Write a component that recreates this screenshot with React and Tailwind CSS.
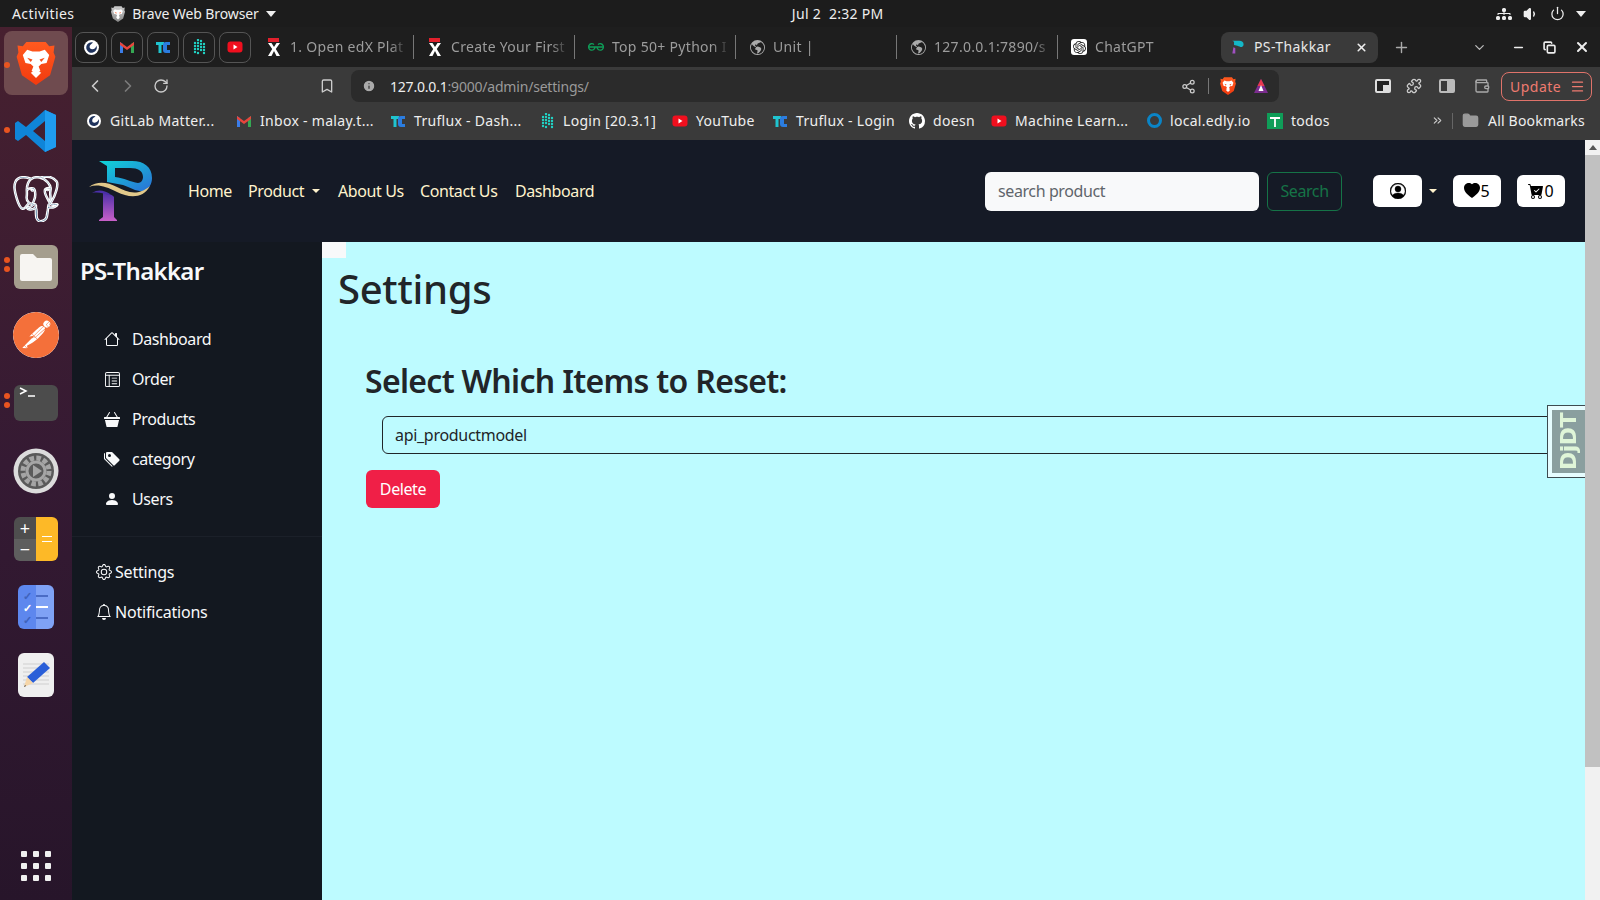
import { ChevronLeft, ChevronRight, RotateCw, Bookmark, Info, Share2, Puzzle, Wallet, Menu, Plus, X, ChevronDown, Minus, Copy, Volume1, Power, ChevronsRight, Folder } from "lucide-react";
import { BsHouse, BsLayoutTextWindowReverse, BsBasket3Fill, BsTagsFill, BsPersonFill, BsGear, BsBell, BsPersonCircle, BsHeartFill, BsCartCheckFill, BsGithub, BsGlobeAmericas, BsDiagram3Fill } from "react-icons/bs";
import { SiPostgresql, SiPostman, SiOpenai } from "react-icons/si";

const ui = "font-['Noto_Sans',sans-serif]";

function BraveLogo({ size = 44, mono = false }) {
  return (
    <svg width={size} height={size} viewBox="0 0 44 50">
      <defs>
        <linearGradient id={mono ? "brm" : "brc"} x1="0" y1="0" x2="0" y2="1">
          <stop offset="0" stopColor={mono ? "#ccc" : "#ff5a1f"} />
          <stop offset="1" stopColor={mono ? "#888" : "#f23a0f"} />
        </linearGradient>
      </defs>
      <path d="M11 1h22l4 5 6-1-1 8 2 5-6 21-16 11-16-11L0 18l2-5-1-8 6 1z" fill={`url(#${mono ? "brm" : "brc"})`} />
      <path d="M12 10l6 2h8l6-2 5 6-3 9-6 1-3 3 2 5-5 3-5-3 2-5-3-3-6-1-3-9z" fill="#fff" />
      <path d="M16 36l6-3 6 3-6 6z" fill="#fff" />
      <path d="M12 19l6 2-2 3zM32 19l-6 2 2 3z" fill="#f4511e" />
    </svg>
  );
}

function Logo() {
  return (
    <svg width="66" height="62" viewBox="0 0 66 62">
      <defs>
        <linearGradient id="ptop" x1="0" y1="0" x2="1" y2="1">
          <stop offset="0" stopColor="#0fd6d8" />
          <stop offset="1" stopColor="#2b6fd6" />
        </linearGradient>
        <linearGradient id="pbot" x1="0" y1="0" x2="0" y2="1">
          <stop offset="0" stopColor="#4a2fa8" />
          <stop offset="1" stopColor="#c860c8" />
        </linearGradient>
      </defs>
      <path d="M11 1h33c12 0 20 6 20 17 0 6-3 11-8 13-7 1-13-3-21-6l-16-3V6z" fill="url(#ptop)" />
      <path d="M27 8h15c8 0 13 3 13 9 0 3-2 6-5 6-7-1-14-5-23-6z" fill="#151a26" />
      <path d="M15 32c4 1 10 3 11 5v20l3 3v1H11v-1l4-3z" fill="url(#pbot)" />
      <path d="M1 27c8-6 18-5 28 0s20 10 33-1c-7 13-21 12-33 6S9 24 1 27z" fill="#e2c98a" />
      <path d="M4 33c6-4 12-3 18 1l-2 1c-5-2-10-3-16-2z" fill="#4a2fa8" />
    </svg>
  );
}

function Pinned({ children }) {
  return <div className="w-8 h-[31px] rounded-lg border border-[#555] flex items-center justify-center">{children}</div>;
}

function Gmail({ size = 16 }) {
  return (
    <svg width={size} height={size} viewBox="0 0 16 16">
      <path d="M1 14V3l3 2v9z" fill="#3b7de8" />
      <path d="M12 14V5l3-2v11z" fill="#35a853" />
      <path d="M1 3l7 5 7-5v3L8 11 1 6z" fill="#e8453c" />
    </svg>
  );
}

function Truflux({ size = 16 }) {
  return (
    <svg width={size} height={size} viewBox="0 0 16 16">
      <path d="M1 3h8v3H6.500v8h-3V6H1z" fill="#1fc4cf" />
      <path d="M15 3h-4a3 3 0 0 0-3 3v5a3 3 0 0 0 3 3h4v-3h-3V6h3z" fill="#2b7de0" />
    </svg>
  );
}

function Dots({ size = 16 }) {
  const cells = [[7, 1], [10, 2], [4, 4], [7, 4], [10, 5], [13, 5], [4, 7], [7, 7], [10, 8], [13, 8], [4, 10], [7, 10], [10, 11], [13, 11], [4, 13], [7, 14], [13, 14]];
  return (
    <svg width={size} height={size} viewBox="0 0 16 16">
      {cells.map(([x, y]) => <circle key={`${x}-${y}`} cx={x} cy={y} r="1.200" fill="#22d3c5" />)}
    </svg>
  );
}

function Yt({ size = 16 }) {
  return (
    <svg width={size} height={size} viewBox="0 0 16 16">
      <rect x="0.500" y="2.500" width="15" height="11" rx="3" fill="#f00f1e" />
      <path d="M6.500 5.600l4 2.400-4 2.400z" fill="#fff" />
    </svg>
  );
}

function GitlabMatter({ size = 16 }) {
  return (
    <svg width={size} height={size} viewBox="0 0 16 16">
      <circle cx="8" cy="8" r="7" fill="#fff" />
      <path d="M8 3a5 5 0 1 0 4.600 3c-.5 2-1.600 3.600-4 3.700-1.500 0-2.400-1-2.400-2.300C6.200 5.500 8 4.500 9.500 3.300z" fill="#1e325c" />
    </svg>
  );
}

function EdxX() {
  return (
    <svg width="16" height="18" viewBox="0 0 16 18">
      <rect x="2" y="0" width="11" height="4" fill="#e2202c" />
      <path d="M2 5h3.500L8 9l2.500-4H14l-4.200 6 4.200 7h-3.500L8 13l-2.500 5H2l4.200-7z" fill="#fff" />
    </svg>
  );
}

function Gfg() {
  return (
    <svg width="16" height="10" viewBox="0 0 16 10">
      <path d="M1 5h14M7 5a3.200 3.200 0 1 1-1-2.400M9 5a3.200 3.200 0 1 0 1-2.400" fill="none" stroke="#0f9d58" strokeWidth="1.300" />
    </svg>
  );
}

function Tab({ icon, label, last }) {
  return (
    <div className={`w-[161px] h-6 flex items-center pl-[13px] ${last ? "" : "border-r border-[#777]"}`}>
      <span className="w-4 h-4 flex items-center justify-center shrink-0">{icon}</span>
      <span className="ml-2 w-[118px] pb-[2px] overflow-hidden whitespace-nowrap text-[14px] tracking-[0.3px] text-[#9c9c9c] [mask-image:linear-gradient(to_right,black_85%,transparent)]">{label}</span>
    </div>
  );
}

const bookmarks = [
  { w: "w-[150px]", icon: <GitlabMatter />, label: "GitLab Matter..." },
  { w: "w-[154px]", icon: <Gmail />, label: "Inbox - malay.t..." },
  { w: "w-[149px]", icon: <Truflux />, label: "Truflux - Dash..." },
  { w: "w-[133px]", icon: <Dots />, label: "Login [20.3.1]" },
  { w: "w-[100px]", icon: <Yt />, label: "YouTube" },
  { w: "w-[137px]", icon: <Truflux />, label: "Truflux - Login" },
  { w: "w-[82px]", icon: <BsGithub size={16} color="#fff" />, label: "doesn" },
  { w: "w-[155px]", icon: <Yt />, label: "Machine Learn..." },
  { w: "w-[121px]", icon: <span className="w-[15px] h-[15px] rounded-full border-[3px] border-[#0a84c6]" />, label: "local.edly.io" },
  {
    w: "w-[100px]",
    icon: (
      <svg width="16" height="16" viewBox="0 0 16 16">
        <rect width="16" height="16" fill="#0f9d58" />
        <path d="M3 5h10M8 5v9" stroke="#fff" strokeWidth="1.800" />
      </svg>
    ),
    label: "todos",
  },
];

function Dot({ className }) {
  return <span className={`absolute left-[4px] w-[6px] h-[6px] rounded-full bg-[#e95420] ${className}`} />;
}

function TopBar() {
  return (
    <div className="h-[27px] bg-[#1c1c1c] text-[#eee] text-[14px] flex items-center shrink-0 relative">
      <span className="ml-3 tracking-[0.4px]">Activities</span>
      <span className="ml-[36px]"><BraveLogo size={16} mono /></span>
      <span className="ml-[6px] tracking-[-0.1px]">Brave Web Browser</span>
      <span className="ml-[7px] w-0 h-0 border-x-[5px] border-x-transparent border-t-[6px] border-t-[#eee]" />
      <span className="ml-[516px] tracking-[0.3px]">Jul 2&nbsp;&nbsp;2:32 PM</span>
      <div className="ml-auto flex items-center gap-[11px] pr-[14px]">
        <BsDiagram3Fill size={16} color="#eee" />
        <Volume1 size={16} color="#eee" fill="#eee" />
        <Power size={15} color="#eee" />
        <span className="w-0 h-0 border-x-[5px] border-x-transparent border-t-[6px] border-t-[#eee]" />
      </div>
    </div>
  );
}

function Dock() {
  return (
    <div className="w-[72px] shrink-0 flex flex-col items-center bg-gradient-to-b from-[#47202f] via-[#351a33] to-[#27152a] relative pt-[4px]">
      <div className="w-16 h-16 rounded-lg bg-[#6f4b4f] flex items-center justify-center relative">
        <span className="absolute left-0 top-[31px] w-[6px] h-[6px] rounded-full bg-[#e95420]" />
        <BraveLogo size={44} />
      </div>
      <div className="mt-[2px] h-[68px] w-full flex items-center justify-center relative">
        <Dot className="top-[30px]" />
        <svg width="44" height="44" viewBox="0 0 44 44">
          <path d="M31 1l11 5v32l-11 5-19-17-8 6-3-2V14l3-2 8 6zM31 12L19 22l12 10z" fill="#0f85d8" />
          <path d="M31 1l11 5v32l-11 5z" fill="#1f9cf0" />
        </svg>
      </div>
      <div className="h-[68px] w-full flex items-center justify-center">
        <SiPostgresql size={46} color="#336791" stroke="#ffffff" strokeWidth="0.6" />
      </div>
      <div className="h-[68px] w-full flex items-center justify-center relative">
        <Dot className="top-[24px]" />
        <Dot className="top-[33px]" />
        <div className="w-[44px] h-[44px] rounded-md bg-[#a59e8e] flex items-center justify-center">
          <svg width="32" height="28" viewBox="0 0 32 28"><path d="M2 1h11l4 4h13a2 2 0 0 1 2 2v19a2 2 0 0 1-2 2H2a2 2 0 0 1-2-2V3a2 2 0 0 1 2-2z" fill="#f7f5f2" /></svg>
        </div>
      </div>
      <div className="h-[68px] w-full flex items-center justify-center">
        <div className="w-[46px] h-[46px] rounded-full bg-white flex items-center justify-center overflow-hidden">
          <SiPostman size={46} color="#f4703a" />
        </div>
      </div>
      <div className="h-[68px] w-full flex items-center justify-center relative">
        <Dot className="top-[24px]" />
        <Dot className="top-[33px]" />
        <div className="w-[44px] h-[36px] rounded-md bg-[#4c4c4c] flex items-start">
          <svg width="26" height="16" viewBox="0 0 26 16"><path d="M6 3l6 3-6 3M14 11h7" fill="none" stroke="#fff" strokeWidth="1.500" /></svg>
        </div>
      </div>
      <div className="h-[68px] w-full flex items-center justify-center">
        <svg width="46" height="46" viewBox="0 0 46 46">
          <circle cx="23" cy="23" r="22.500" fill="#dcdcdc" />
          <circle cx="23" cy="23" r="18" fill="#5a5a5a" />
          <circle cx="23" cy="23" r="13" fill="none" stroke="#a5a5a5" strokeWidth="5" strokeDasharray="4.500 2.300" />
          <circle cx="23" cy="23" r="9" fill="none" stroke="#a5a5a5" strokeWidth="3" />
          <path d="M20 17l9 6-9 6z" fill="#a5a5a5" />
        </svg>
      </div>
      <div className="h-[68px] w-full flex items-center justify-center">
        <div className="w-[44px] h-[44px] rounded-md overflow-hidden grid grid-cols-2 grid-rows-2">
          <div className="bg-[#4e4e4e] text-white text-[18px] leading-[22px] text-center">+</div>
          <div className="row-span-2 bg-[#fdb927] flex flex-col items-center justify-center gap-[4px]">
            <span className="w-[10px] h-px bg-white" />
            <span className="w-[10px] h-px bg-white" />
          </div>
          <div className="bg-[#5e5e5e] text-white text-[18px] leading-[20px] text-center">−</div>
        </div>
      </div>
      <div className="h-[68px] w-full flex items-center justify-center">
        <div className="w-9 h-11 rounded-md overflow-hidden grid grid-cols-2">
          <div className="bg-[#5d87ee] flex flex-col items-center justify-center gap-[5px] text-[11px] leading-[7px] text-white font-bold"><span className="text-[#3f63bd]">✓</span><span>✓</span><span className="text-[#3f63bd]">✓</span></div>
          <div className="bg-[#7fa2f5] flex flex-col items-start justify-center gap-[9px]">
            <span className="w-3 h-[2px] bg-[#4a6cc5]" />
            <span className="w-3 h-[2px] bg-white" />
            <span className="w-3 h-[2px] bg-[#4a6cc5]" />
          </div>
        </div>
      </div>
      <div className="h-[68px] w-full flex items-center justify-center">
        <div className="w-9 h-11 rounded-md bg-[#efefef] flex items-center justify-center">
          <svg width="32" height="32" viewBox="0 0 32 32">
            <path d="M3 5h26M3 9h26M3 13h26M3 17h26M3 21h26M3 25h26" stroke="#cfcfcf" strokeWidth="1" />
            <path d="M24 3l6 6-17 15-6-6z" fill="#2a5fd8" />
            <path d="M7 18l6 6-9 4z" fill="#f5d5a8" />
            <path d="M5 26l-1 2 2-1z" fill="#333" />
          </svg>
        </div>
      </div>
      <div className="mt-auto mb-[19px] grid grid-cols-3 gap-[6px]">
        {[0, 1, 2, 3, 4, 5, 6, 7, 8].map((i) => <span key={i} className="w-[6px] h-[6px] rounded-[1px] bg-[#f0f0f0]" />)}
      </div>
    </div>
  );
}

function TabStrip() {
  return (
    <div className="h-[40px] bg-[#1e1e1e] flex items-center shrink-0">
      <div className="flex items-center gap-[4px] pl-[3px] w-[181px] shrink-0">
        <Pinned><GitlabMatter size={17} /></Pinned>
        <Pinned><Gmail /></Pinned>
        <Pinned><Truflux /></Pinned>
        <Pinned><Dots /></Pinned>
        <Pinned><Yt /></Pinned>
      </div>
      <Tab icon={<EdxX />} label="1. Open edX Plat" />
      <Tab icon={<EdxX />} label="Create Your First" />
      <Tab icon={<Gfg />} label="Top 50+ Python I" />
      <Tab icon={<BsGlobeAmericas size={15} color="#aaa" />} label="Unit |" />
      <Tab icon={<BsGlobeAmericas size={15} color="#aaa" />} label="127.0.0.1:7890/s" />
      <Tab icon={<span className="w-4 h-4 rounded-[3px] bg-white flex items-center justify-center"><SiOpenai size={13} color="#222" /></span>} label="ChatGPT" last />
      <div className="ml-[2px] w-[157px] h-[31px] rounded-lg bg-[#3a3a3a] flex items-center pl-[4px] pr-[10px]">
        <span className="ml-[4px] w-4 flex justify-center"><svg width="14" height="16" viewBox="0 0 66 62"><path d="M11 1h33c12 0 20 6 20 17 0 6-3 11-8 13-7 1-13-3-21-6l-16-3V6z" fill="#14b8c8" /><path d="M16 32c4 1 8 3 9 5v25H11z" fill="#a050c0" /></svg></span>
        <span className="ml-[9px] pb-[2px] text-[14px] tracking-[0.4px] text-[#e8e8e8]">PS-Thakkar</span>
        <X size={13} color="#eee" strokeWidth={3} className="ml-auto" />
      </div>
      <Plus size={17} color="#aaa" className="ml-[15px]" />
      <ChevronDown size={15} color="#bbb" className="ml-[62px]" />
      <Minus size={13} color="#eee" strokeWidth={3} className="ml-[25px]" />
      <Copy size={13} color="#eee" strokeWidth={3} className="ml-[18px]" />
      <X size={16} color="#eee" strokeWidth={3} className="ml-[18px]" />
    </div>
  );
}

function Toolbar() {
  return (
    <div className="h-[36px] bg-[#3a3a3a] flex items-center pt-[2px] shrink-0">
      <ChevronLeft size={20} color="#ccc" className="ml-[13px]" />
      <ChevronRight size={20} color="#7c7c7c" className="ml-[13px]" />
      <RotateCw size={16} color="#ccc" className="ml-[15px]" />
      <Bookmark size={16} color="#ccc" className="ml-[150px]" />
      <div className="ml-[16px] w-[928px] h-[32px] rounded-lg bg-[#2b2b2b] flex items-center">
        <Info size={14} color="#2b2b2b" fill="#aaa" className="ml-[11px]" />
        <span className="ml-[14px] text-[14px] tracking-[-0.2px] text-[#eee]">127.0.0.1<span className="text-[#9a9a9a]">:9000/admin/settings/</span></span>
        <Share2 size={15} color="#ccc" className="ml-auto" />
        <span className="ml-[12px] w-px h-[16px] bg-[#777]" />
        <span className="ml-[10px]"><BraveLogo size={18} /></span>
        <svg className="ml-[16px] mr-[10px]" width="16" height="16" viewBox="0 0 16 16">
          <path d="M8 1l7 14H1z" fill="#7b2d8e" />
          <path d="M8 1l3.500 7h-7z" fill="#e8384f" />
          <path d="M8 7l2.500 6h-5z" fill="#fff" />
        </svg>
      </div>
      <div className="ml-[96px] w-[16px] h-[14px] rounded-[2px] border-2 border-[#ddd] bg-[#222] flex items-end justify-end"><span className="w-[6px] h-[6px] bg-[#ddd]" /></div>
      <Puzzle size={16} color="#ccc" className="ml-[15px]" />
      <div className="ml-[17px] w-[16px] h-[14px] rounded-[2px] border-2 border-[#bbb] flex justify-end"><span className="w-[6px] h-full bg-[#bbb]" /></div>
      <Wallet size={16} color="#aaa" className="ml-[19px]" />
      <div className="ml-[11px] w-[91px] h-[29px] rounded-lg border border-[#e0736a] flex items-center justify-between pl-[8px] pr-[6px] text-[#ef7b70] text-[14px] tracking-[0.5px]">
        <span>Update</span>
        <Menu size={15} color="#ef7b70" />
      </div>
    </div>
  );
}

function BookmarksBar() {
  return (
    <div className="h-[37px] bg-[#3a3a3a] flex items-center pl-[14px] pb-[2px] shrink-0">
      {bookmarks.map((b) => (
        <div key={b.label} className={`${b.w} shrink-0 flex items-center gap-[8px] text-[14px] tracking-[0.3px] text-[#eee] whitespace-nowrap`}>
          <span className="w-4 h-4 flex items-center justify-center shrink-0">{b.icon}</span>
          <span>{b.label}</span>
        </div>
      ))}
      <ChevronsRight size={13} color="#ccc" className="ml-[64px]" />
      <span className="ml-[8px] w-px h-[16px] bg-[#666]" />
      <Folder size={17} color="#9a9a9a" fill="#9a9a9a" className="ml-[9px]" />
      <span className="ml-[9px] text-[14px] tracking-[0.2px] text-[#eee] whitespace-nowrap">All Bookmarks</span>
    </div>
  );
}

function Navbar() {
  const links = [
    { w: "w-[60px]", label: "Home" },
    { w: "w-[90px]", label: "Product", caret: true },
    { w: "w-[82px]", label: "About Us" },
    { w: "w-[95px]", label: "Contact Us" },
    { w: "w-[90px]", label: "Dashboard" },
  ];
  return (
    <div className="h-[102px] bg-[#151a26] flex items-center shrink-0">
      <div className="ml-[16px] w-[100px] shrink-0"><Logo /></div>
      <div className="flex items-center text-[16px] tracking-[-0.4px] text-[#fff3cd]">
        {links.map((l) => (
          <span key={l.label} className={`${l.w} flex items-center whitespace-nowrap`}>
            {l.label}
            {l.caret && <span className="ml-[8px] w-0 h-0 border-x-[4px] border-x-transparent border-t-[4px] border-t-[#fff3cd]" />}
          </span>
        ))}
      </div>
      <div className="ml-[380px] w-[274px] h-[39px] rounded-md bg-[#f8f9fa] flex items-center pl-[13px] text-[16px] tracking-[-0.4px] text-[#5f656b]">search product</div>
      <div className="ml-[8px] w-[75px] h-[39px] rounded-md border border-[#157347] flex items-center justify-center text-[16px] tracking-[-0.4px] text-[#157347]">Search</div>
      <div className="ml-[31px] w-[49px] h-[32px] rounded-md bg-white flex items-center justify-center"><BsPersonCircle size={16} color="#000" stroke="#000" strokeWidth="0.4" /></div>
      <span className="ml-[7px] w-0 h-0 border-x-[4px] border-x-transparent border-t-[4px] border-t-[#fff3cd]" />
      <div className="ml-[16px] w-[48px] h-[32px] rounded-md bg-white flex items-center justify-center text-[16px] text-black"><BsHeartFill size={16} color="#000" />5</div>
      <div className="ml-[16px] w-[48px] h-[32px] rounded-md bg-white flex items-center justify-center text-[16px] text-black"><BsCartCheckFill size={16} color="#000" />0</div>
    </div>
  );
}

function Sidebar() {
  const items = [
    { icon: <BsHouse size={16} />, label: "Dashboard" },
    { icon: <BsLayoutTextWindowReverse size={15} />, label: "Order" },
    { icon: <BsBasket3Fill size={16} />, label: "Products" },
    { icon: <BsTagsFill size={16} />, label: "category" },
    { icon: <BsPersonFill size={16} />, label: "Users" },
  ];
  return (
    <div className="w-[250px] shrink-0 bg-[#131820] text-[#f8f9fa]">
      <div className="pl-[8px] pt-[16px] text-[24px] leading-[26px] font-semibold tracking-[-0.7px]">PS-Thakkar</div>
      <div className="mt-[35px] pl-[32px] border-b border-[#1b2029] pb-[17px]">
        {items.map((it) => (
          <div key={it.label} className="h-[40px] flex items-center text-[16px] tracking-[-0.4px]">
            <span className="w-4 flex justify-center shrink-0">{it.icon}</span>
            <span className="ml-[12px]">{it.label}</span>
          </div>
        ))}
      </div>
      <div className="mt-[15px] pl-[24px]">
        <div className="h-[40px] flex items-center gap-[3px] text-[16px] tracking-[-0.2px]"><BsGear size={16} />Settings</div>
        <div className="h-[40px] flex items-center gap-[3px] text-[16px] tracking-[-0.2px]"><BsBell size={16} />Notifications</div>
      </div>
    </div>
  );
}

function Content() {
  return (
    <div className="flex-1 min-w-0 bg-[#bdfbff] text-[#212529] relative overflow-hidden">
      <div className="w-[24px] h-[16px] bg-[#f8f9fa]" />
      <h1 className="ml-[16px] mt-[7px] text-[40px] leading-[48px] font-medium tracking-[-0.3px]">Settings</h1>
      <div className="ml-[44px] mt-[49px]">
        <h2 className="-ml-px text-[32px] leading-[38px] font-semibold tracking-[-0.7px]">Select Which Items to Reset:</h2>
        <div className="ml-[16px] mt-[16px] mr-[5px] h-[38px] rounded-md border border-[#212529] flex items-center pl-[12px] text-[16px] tracking-[-0.3px]">api_productmodel</div>
        <button className="mt-[16px] w-[74px] h-[38px] rounded-md bg-[#f01f47] text-white text-[16px] tracking-[-0.4px]">Delete</button>
      </div>
      <div className="absolute right-0 top-[163px] w-[38px] h-[73px] bg-[#e6fdff] border border-r-0 border-[#3d4b50] p-[4px] pr-0 flex">
        <div className="flex-1 bg-[#8a9f9f] flex items-center justify-center">
          <span className="[writing-mode:vertical-rl] rotate-180 font-['DejaVu_Sans',sans-serif] font-bold text-[22px] tracking-[-0.5px] text-[#dff5d8]">DjDT</span>
        </div>
      </div>
    </div>
  );
}

function Scrollbar() {
  return (
    <div className="w-[15px] shrink-0 bg-[#f1f1f1] flex flex-col items-center">
      <span className="mt-[5px] w-0 h-0 border-x-[4px] border-x-transparent border-b-[5px] border-b-[#555]" />
      <div className="mt-[5px] w-full h-[612px] bg-[#c1c1c1]" />
    </div>
  );
}

export default function App() {
  return (
    <div className={`${ui} w-[1600px] h-[900px] flex flex-col overflow-hidden`}>
      <TopBar />
      <div className="flex-1 min-h-0 flex">
        <Dock />
        <div className="flex-1 min-w-0 flex flex-col">
          <TabStrip />
          <Toolbar />
          <BookmarksBar />
          <div className="flex-1 min-h-0 flex">
            <div className="flex-1 min-w-0 flex flex-col">
              <Navbar />
              <div className="flex-1 min-h-0 flex">
                <Sidebar />
                <Content />
              </div>
            </div>
            <Scrollbar />
          </div>
        </div>
      </div>
    </div>
  );
}
